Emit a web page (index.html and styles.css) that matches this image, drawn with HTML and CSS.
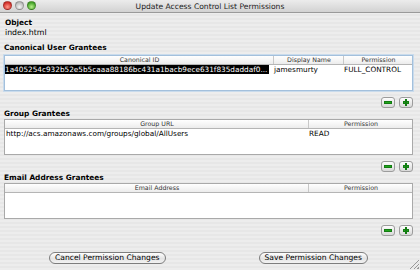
FILE: index.html
```html
<!DOCTYPE html>
<html lang="en">
<head>
    <meta charset="UTF-8">
    <title>Update Access Control List Permissions</title>
    <link rel="stylesheet" href="styles.css">
</head>
<body>
    <div class="window">
        <div class="titlebar">
            <div class="lights">
                <span class="light red"></span>
                <span class="light yellow"></span>
                <span class="light green"></span>
            </div>
            <span class="title">Update Access Control List Permissions</span>
        </div>
        <div class="content">
            <div class="label first">Object</div>
            <div class="value">index.html</div>

            <div class="label">Canonical User Grantees</div>
            <div class="table focused">
                <div class="row head canonical">
                    <span>Canonical ID</span>
                    <span>Display Name</span>
                    <span>Permission</span>
                </div>
                <div class="row canonical">
                    <span><em class="selected">1a405254c932b52e5b5caaa88186bc431a1bacb9ece631f835daddaf0...</em></span>
                    <span>jamesmurty</span>
                    <span>FULL_CONTROL</span>
                </div>
            </div>
            <div class="tools">
                <span class="tool minus"><i></i></span>
                <span class="tool plus"><i></i><b></b></span>
            </div>

            <div class="label">Group Grantees</div>
            <div class="table">
                <div class="row head group">
                    <span>Group URL</span>
                    <span>Permission</span>
                </div>
                <div class="row group">
                    <span>http://acs.amazonaws.com/groups/global/AllUsers</span>
                    <span>READ</span>
                </div>
            </div>
            <div class="tools">
                <span class="tool minus"><i></i></span>
                <span class="tool plus"><i></i><b></b></span>
            </div>

            <div class="label">Email Address Grantees</div>
            <div class="table">
                <div class="row head group">
                    <span>Email Address</span>
                    <span>Permission</span>
                </div>
            </div>
            <div class="tools">
                <span class="tool minus"><i></i></span>
                <span class="tool plus"><i></i><b></b></span>
            </div>

            <div class="actions">
                <button class="pill">Cancel Permission Changes</button>
                <button class="pill">Save Permission Changes</button>
            </div>
        </div>
        <div class="grip"></div>
    </div>
</body>
</html>
```

FILE: styles.css
```css
body {
    margin: 0;
    font-family: "DejaVu Sans", sans-serif;
    font-size: 7.6px;
    color: #000;
}
.window {
    position: relative;
    width: 420px;
    height: 270px;
    overflow: hidden;
    background-color: #ececec;
    background-image: repeating-linear-gradient(#ededed 0, #ededed 2px, #e7e7e7 2px, #e7e7e7 4px);
}
.titlebar {
    height: 13px;
    box-sizing: border-box;
    display: flex;
    align-items: center;
    justify-content: center;
    position: relative;
    background: linear-gradient(#ececec, #d2d2d2);
    border-bottom: 1px solid #9a9a9a;
}
.title {
    font-size: 7.6px;
    color: #222;
}
.lights {
    position: absolute;
    left: 3px;
    top: 1px;
    display: flex;
    gap: 3px;
}
.light {
    width: 9px;
    height: 9px;
    border-radius: 50%;
    box-sizing: border-box;
    border: 1px solid rgba(0, 0, 0, 0.25);
}
.red {
    background: radial-gradient(circle at 50% 70%, #ff9a8a, #d3302a 70%);
}
.yellow {
    background: radial-gradient(circle at 50% 70%, #f4f4f4, #b8b8b8 75%);
}
.green {
    background: radial-gradient(circle at 50% 70%, #b8f08a, #46a52a 70%);
}
.content {
    padding: 0 7px 0 4px;
}
.label {
    font-weight: bold;
    font-size: 7.4px;
    height: 10px;
    line-height: 11px;
}
.label.first {
    margin-top: 4px;
    margin-left: 1px;
}
.value {
    font-size: 7.8px;
    height: 10px;
    line-height: 11px;
    margin-left: 1px;
    margin-bottom: 5px;
}
.table {
    margin-top: 1px;
    height: 36px;
    box-sizing: border-box;
    background: #fff;
    border: 1px solid #a9a9a9;
}
.table.focused {
    margin-top: 3px;
    border-color: #a3c0dc;
    box-shadow: 0 0 0 1px #c9dbec;
}
.row {
    display: grid;
    height: 10px;
    line-height: 10px;
    font-size: 7.3px;
}
.canonical {
    grid-template-columns: 268px 70px 1fr;
}
.group {
    grid-template-columns: 303px 1fr;
}
.row span {
    white-space: nowrap;
    overflow: hidden;
    padding-left: 1px;
}
.head {
    height: 8px;
    line-height: 8px;
    font-size: 6.3px;
    color: #333;
    background: linear-gradient(#ffffff, #ececec);
    border-bottom: 1px solid #b5b5b5;
}
.head span {
    text-align: center;
    border-left: 1px solid #c8c8c8;
}
.head span:first-child {
    border-left: none;
}
.row .selected {
    font-style: normal;
    background: #000;
    color: #fff;
    font-size: 7.3px;
    margin-left: -1px;
    padding-right: 2px;
}
.tools {
    display: flex;
    justify-content: flex-end;
    gap: 4px;
    margin-top: 6px;
    height: 11px;
}
.tool {
    position: relative;
    width: 14px;
    height: 11px;
    box-sizing: border-box;
    border: 1px solid #9c9c9c;
    border-radius: 3px;
    background: linear-gradient(#fdfdfd, #d8d8d8);
}
.tool i, .tool b {
    position: absolute;
    background: #21a51d;
    border: 1px solid #137c12;
}
.tool i {
    left: 3px;
    top: 3px;
    width: 4px;
    height: 1px;
}
.minus i {
    left: 2px;
    width: 6px;
}
.tool b {
    left: 5px;
    top: 1px;
    width: 0;
    height: 5px;
}
.actions {
    display: flex;
    justify-content: center;
    gap: 93px;
    margin-top: 16px;
}
.pill {
    font-family: "DejaVu Sans", sans-serif;
    font-size: 7.6px;
    height: 12px;
    line-height: 10px;
    padding: 0 5px;
    border: 1px solid #7d7d7d;
    border-radius: 6px;
    background: linear-gradient(#ffffff, #e4e4e4 55%, #f2f2f2);
    color: #000;
}
.grip {
    position: absolute;
    right: 1px;
    bottom: 1px;
    width: 9px;
    height: 9px;
    background: linear-gradient(135deg, transparent 45%, #999 45%, #999 52%, transparent 52%, transparent 68%, #999 68%, #999 75%, transparent 75%, transparent 88%, #999 88%);
}
```
